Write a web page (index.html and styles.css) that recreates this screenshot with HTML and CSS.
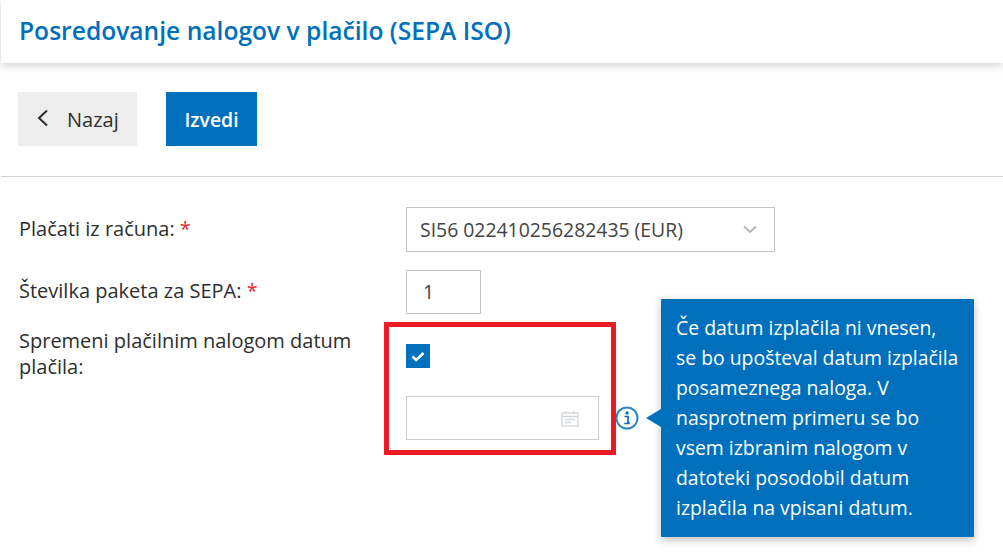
FILE: index.html
```html
<!DOCTYPE html>
<html lang="sl">
<head>
<meta charset="utf-8">
<title>Posredovanje nalogov v plačilo (SEPA ISO)</title>
<link rel="stylesheet" href="styles.css">
</head>
<body>
<header class="header"><h1 class="title">Posredovanje nalogov v plačilo (SEPA ISO)</h1></header>
<div class="toolbar">
  <button class="btn btn-back" type="button">
    <svg class="back-icon" width="13" height="18" viewBox="0 0 13 18"><path d="M11 .5 3 8l8 7.500" fill="none" stroke="#2b2b2b" stroke-width="2"/></svg>
    Nazaj
  </button>
  <button class="btn btn-primary" type="button">Izvedi</button>
</div>
<main class="form">
  <div class="row row-account">
    <label class="label">Plačati iz računa: <span class="req">*</span></label>
    <div class="select">
      <span>SI56 022410256282435 (EUR)</span>
      <svg width="14" height="9" viewBox="0 0 14 9"><path d="M1 1.500 7 7l6-5.500" fill="none" stroke="#b5b5b5" stroke-width="1.800"/></svg>
    </div>
  </div>
  <div class="row row-number">
    <label class="label">Številka paketa za SEPA: <span class="req">*</span></label>
    <div class="number">1</div>
  </div>
  <div class="row row-date">
    <label class="label">Spremeni plačilnim nalogom datum plačila:</label>
    <div class="date-col">
      <div class="checkbox">
        <svg width="14" height="11" viewBox="0 0 14 11"><path d="M1.500 5.500 5.200 9 12.500 2" fill="none" stroke="#fff" stroke-width="2.600"/></svg>
      </div>
      <div class="date-line">
        <div class="date">
          <svg width="18" height="17" viewBox="0 0 18 17"><g fill="none" stroke="#d3d6da" stroke-width="1.300"><rect x="1" y="3" width="16" height="13"/><path d="M1 6.500h16M5 1v3M13 1v3M4 9.500h10M4 12.500h6"/></g></svg>
        </div>
        <svg class="info" width="24" height="24" viewBox="0 0 24 24"><circle cx="12" cy="12" r="10.500" fill="#fff" stroke="#2f87c4" stroke-width="2"/><circle cx="12" cy="7" r="1.700" fill="#0070bc"/><path d="M9.500 10.500H13V17h1.800M9.300 17.500h5.500" fill="none" stroke="#0070bc" stroke-width="1.700"/></svg>
      </div>
    </div>
  </div>
</main>
<div class="highlight"></div>
<aside class="tooltip">Če datum izplačila ni vnesen,<br>se bo upošteval datum izplačila posameznega naloga. V nasprotnem primeru se bo vsem izbranim nalogom v datoteki posodobil datum izplačila na vpisani datum.</aside>
</body>
</html>
```
FILE: styles.css
```css
* { box-sizing: border-box; }
html, body { margin: 0; height: 100%; overflow: hidden; }
body {
  position: relative;
  background: #fff;
  color: #2e2e2e;
  font-family: "Open Sans", "Liberation Sans", sans-serif;
  font-size: 20px;
}
.header {
  height: 63px;
  margin-left: 1px;
  padding: 13px 0 0 18px;
  box-shadow: 0 2px 9px rgba(0, 0, 0, .2);
}
.title {
  margin: 0;
  color: #0070bc;
  font-size: 24.600px;
  font-weight: 600;
  line-height: 36px;
}
.toolbar {
  display: flex;
  gap: 29px;
  height: 114px;
  margin-left: 1px;
  padding: 29px 0 0 17px;
  border-bottom: 1px solid #d2d2d2;
}
.btn {
  height: 54px;
  border: 0;
  font-family: inherit;
  font-size: 20px;
}
.btn-back {
  display: flex;
  align-items: center;
  gap: 18px;
  width: 119px;
  padding: 0 0 0 18px;
  background: #ededed;
  color: #2e2e2e;
}
.btn-primary {
  width: 91px;
  padding: 0;
  background: #0070bc;
  color: #fff;
  font-size: 19.400px;
  font-weight: 600;
}
.form { padding: 30px 0 0 19px; }
.row { display: grid; grid-template-columns: 387px 1fr; }
.row-account { height: 63px; }
.row-number { height: 65px; }
.label { line-height: 26px; }
.row-account .label { padding-top: 9px; }
.row-number .label { padding-top: 8px; }
.row-date .label { width: 345px; margin-top: -7px; }
.req { color: #e3272f; }
.select {
  display: flex;
  align-items: center;
  justify-content: space-between;
  width: 369px;
  height: 45px;
  padding: 0 17px 0 13px;
  border: 1px solid #c4c4c4;
  color: #444;
  font-size: 19.400px;
}
.number {
  width: 75px;
  height: 44px;
  padding: 8px 0 0 16px;
  border: 1px solid #c4c4c4;
  line-height: 26px;
  color: #444;
  font-size: 19.400px;
}
.date-col { display: flex; flex-direction: column; gap: 28px; padding-top: 9px; }
.checkbox {
  display: flex;
  align-items: center;
  justify-content: center;
  width: 24px;
  height: 24px;
  background: #0070bc;
}
.date-line { display: flex; align-items: center; gap: 16px; }
.date {
  display: flex;
  align-items: center;
  justify-content: flex-end;
  width: 193px;
  height: 44px;
  padding-right: 19px;
  border: 1px solid #cfcfcf;
}
.info { flex: none; }
.highlight {
  position: absolute;
  left: 384px;
  top: 322px;
  width: 232px;
  height: 133px;
  border: 5px solid #ed1c24;
}
.tooltip {
  position: absolute;
  left: 661px;
  top: 299px;
  width: 313px;
  height: 238px;
  padding: 14px 12px 0 15px;
  background: #0070bc;
  color: #fff;
  font-size: 19.400px;
  line-height: 30px;
  border-radius: 1px;
  box-shadow: 0 3px 8px rgba(0, 0, 0, .25);
}
.tooltip::before {
  content: "";
  position: absolute;
  left: -15px;
  top: 110px;
  border-style: solid;
  border-width: 9px 15px 9px 0;
  border-color: transparent #0070bc transparent transparent;
}
```
